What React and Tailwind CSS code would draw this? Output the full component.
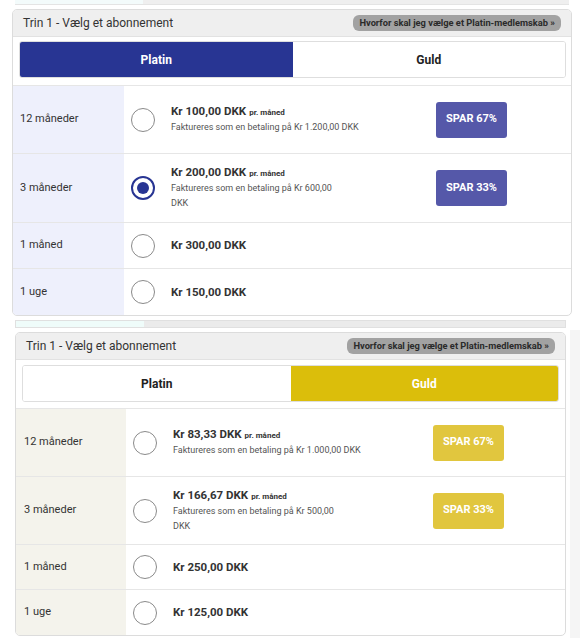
const plans = {
  platin: {
    left: 'bg-[#eef0fc]',
    rows: [
      { label: '12 måneder', price: 'Kr 100,00 DKK', per: true, sub: ['Faktureres som en betaling på Kr 1.200,00 DKK'], badge: 'SPAR 67%' },
      { label: '3 måneder', price: 'Kr 200,00 DKK', per: true, sub: ['Faktureres som en betaling på Kr 600,00', 'DKK'], badge: 'SPAR 33%', checked: true },
      { label: '1 måned', price: 'Kr 300,00 DKK' },
      { label: '1 uge', price: 'Kr 150,00 DKK' },
    ],
  },
  guld: {
    left: 'bg-[#f4f3ec]',
    rows: [
      { label: '12 måneder', price: 'Kr 83,33 DKK', per: true, sub: ['Faktureres som en betaling på Kr 1.000,00 DKK'], badge: 'SPAR 67%' },
      { label: '3 måneder', price: 'Kr 166,67 DKK', per: true, sub: ['Faktureres som en betaling på Kr 500,00', 'DKK'], badge: 'SPAR 33%' },
      { label: '1 måned', price: 'Kr 250,00 DKK' },
      { label: '1 uge', price: 'Kr 125,00 DKK' },
    ],
  },
};

function Radio({ checked }) {
  if (checked) {
    return (
      <div className="w-[24px] h-[24px] rounded-full border-2 border-[#283593] flex items-center justify-center shrink-0">
        <div className="w-[12px] h-[12px] rounded-full bg-[#283593]" />
      </div>
    );
  }
  return <div className="w-[24px] h-[24px] rounded-full border-[1.5px] border-[#8a8a8a] shrink-0" />;
}

function Panel({ kind }) {
  const p = plans[kind];
  const gold = kind === 'guld';
  const heights = gold ? ['h-[68px]', 'h-[68px]', 'h-[45px]', 'h-[45px]'] : ['h-[68px]', 'h-[69px]', 'h-[46px]', 'h-[46px]'];
  return (
    <div className="border border-[#dcdcdc] rounded-[5px] overflow-hidden bg-white">
      <div className="h-[27px] bg-[#efefef] border-b border-[#e2e2e2] flex items-center justify-between pl-[10px] pr-[10px]">
        <span className="text-[12px] text-[#333]">Trin 1 - Vælg et abonnement</span>
        <span className="h-[16px] px-[6px] rounded-[6px] bg-[#a2a2a2] text-[#2a2a2a] text-[9.3px] font-bold flex items-center">
          Hvorfor skal jeg vælge et Platin-medlemskab »
        </span>
      </div>
      <div className={gold ? 'px-[6px] pt-[5px] pb-[6px]' : 'pl-[6px] pr-[5px] pt-[4px] pb-[7px]'}>
        <div className="flex h-[37px] rounded-[3px] overflow-hidden border border-[#dedede]">
          <div className={`flex-1 flex items-center justify-center text-[12px] font-bold ${gold ? 'bg-white text-[#222]' : 'bg-[#283593] text-white'}`}>Platin</div>
          <div className={`flex-1 flex items-center justify-center text-[12px] font-bold ${gold ? 'bg-[#dbbe0b] text-white' : 'bg-white text-[#222]'}`}>Guld</div>
        </div>
      </div>
      <div className="border-t border-[#e6e6e6]">
        {p.rows.map((r, i) => (
          <div key={i} className={`flex ${heights[i]} ${i < 3 ? 'border-b border-[#e6e6e6]' : ''}`}>
            <div className={`${gold ? 'w-[110px] pl-[8px]' : 'w-[111px] pl-[7px]'} ${p.left} flex items-center text-[11px] text-[#333]`}>{r.label}</div>
            <div className="flex-1 flex items-center pl-[7px]">
              <Radio checked={r.checked} />
              <div className={`${gold ? 'w-[276px]' : 'w-[281px]'} pl-[16px]`}>
                <div className="text-[11.5px] font-bold text-[#333] leading-[15px]">
                  {r.price}
                  {r.per && <span className="text-[8px] ml-[3px]">pr. måned</span>}
                </div>
                {r.sub && r.sub.map((s, j) => (
                  <div key={j} className="text-[9px] text-[#555] leading-[15px]">{s}</div>
                ))}
              </div>
              {r.badge && (
                <div className={`w-[71px] h-[36px] rounded-[3px] flex items-center justify-center text-[11px] font-bold text-white ${gold ? 'bg-[#e1c63e]' : 'bg-[#5558a9]'}`}>
                  {r.badge}
                </div>
              )}
            </div>
          </div>
        ))}
      </div>
    </div>
  );
}

export default function App() {
  return (
    <div className="w-[580px] h-[638px] bg-white overflow-hidden" style={{ fontFamily: 'Roboto, "Noto Sans", sans-serif' }}>
      {/* top screenshot */}
      <div className="pl-[12px] pr-[8px] h-[318px]">
        <div className="h-[5px] border-b border-[#e4e4e4] flex mx-[3px]">
          <div className="w-[128px] bg-[#f3fbfb]" />
          <div className="flex-1 bg-[#efefef]" />
        </div>
        <div className="pt-[4px]">
          <Panel kind="platin" />
        </div>
      </div>
      {/* bottom screenshot */}
      <div className="flex h-[320px]">
        <div className="w-[570px] pl-[15px] pr-[4px]">
          <div className="h-[10px] pt-[2px]">
            <div className="h-[8px] flex border border-[#e0e0e0]">
              <div className="w-[128px] bg-[#effcfa]" />
              <div className="flex-1 bg-[#ebebeb]" />
            </div>
          </div>
          <div className="pt-[4px]">
            <Panel kind="guld" />
          </div>
        </div>
        <div className="flex-1 bg-[#f5f5f5] mt-[12px]" />
      </div>
    </div>
  );
}
